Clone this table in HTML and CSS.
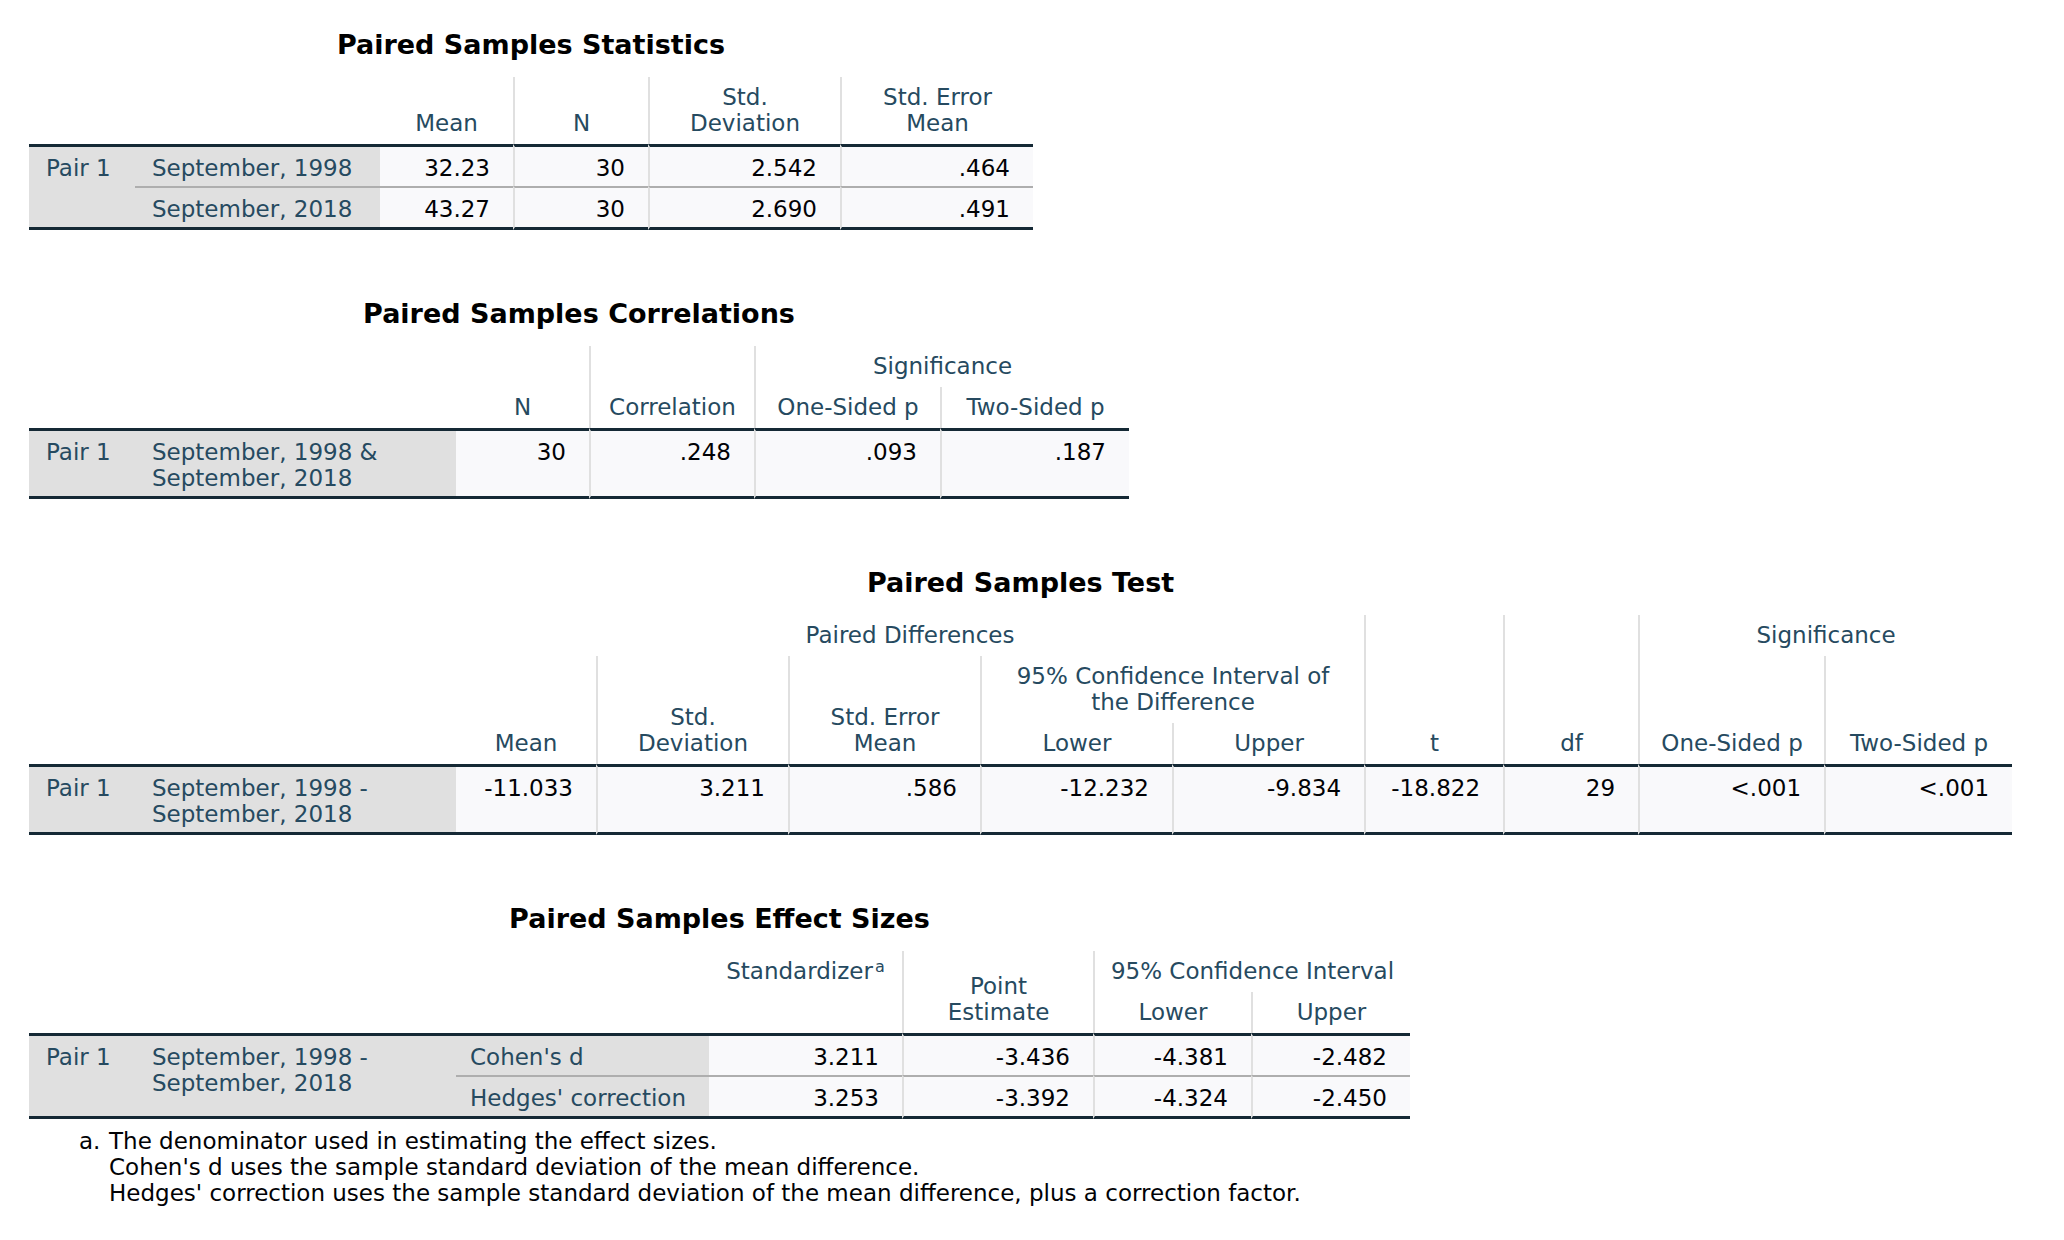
FILE: index.html
```html
<!DOCTYPE html>
<html>
<head>
<meta charset="utf-8">
<title>Paired Samples T-Test</title>
<link rel="stylesheet" href="styles.css">
</head>
<body>

<section class="pivot">
  <h2 class="title">Paired Samples Statistics</h2>
  <table class="pt w1">
    <colgroup><col class="c106"><col class="c245"><col class="c133"><col class="c135"><col class="c192"><col class="c193"></colgroup>
    <thead>
      <tr><th colspan="2"></th><th>Mean</th><th class="vl">N</th><th class="vl">Std.<br>Deviation</th><th class="vl">Std. Error<br>Mean</th></tr>
    </thead>
    <tbody>
      <tr><th class="lab bb" rowspan="2">Pair 1</th><th class="lab">September, 1998</th><td>32.23</td><td class="vl">30</td><td class="vl">2.542</td><td class="vl">.464</td></tr>
      <tr class="sep"><th class="lab">September, 2018</th><td>43.27</td><td class="vl">30</td><td class="vl">2.690</td><td class="vl">.491</td></tr>
    </tbody>
  </table>
</section>

<section class="pivot">
  <h2 class="title">Paired Samples Correlations</h2>
  <table class="pt w2">
    <colgroup><col class="c106"><col class="c321"><col class="c133"><col class="c165"><col class="c186"><col class="c189"></colgroup>
    <thead>
      <tr><th colspan="2" rowspan="2"></th><th rowspan="2">N</th><th rowspan="2" class="vl">Correlation</th><th colspan="2" class="vl">Significance</th></tr>
      <tr><th class="vl">One-Sided p</th><th class="vl">Two-Sided p</th></tr>
    </thead>
    <tbody>
      <tr><th class="lab">Pair 1</th><th class="lab">September, 1998 &amp;<br>September, 2018</th><td>30</td><td class="vl">.248</td><td class="vl">.093</td><td class="vl">.187</td></tr>
    </tbody>
  </table>
</section>

<section class="pivot">
  <h2 class="title">Paired Samples Test</h2>
  <table class="pt w3">
    <colgroup><col class="c106"><col class="c321"><col class="c140"><col class="c192"><col class="c192"><col class="c192"><col class="c192"><col class="c139"><col class="c135"><col class="c186"><col class="c188"></colgroup>
    <thead>
      <tr><th colspan="2" rowspan="3"></th><th colspan="5">Paired Differences</th><th rowspan="3" class="vl">t</th><th rowspan="3" class="vl">df</th><th colspan="2" class="vl">Significance</th></tr>
      <tr><th rowspan="2">Mean</th><th rowspan="2" class="vl">Std.<br>Deviation</th><th rowspan="2" class="vl">Std. Error<br>Mean</th><th colspan="2" class="vl">95% Confidence Interval of<br>the Difference</th><th rowspan="2" class="vl">One-Sided p</th><th rowspan="2" class="vl">Two-Sided p</th></tr>
      <tr><th class="vl">Lower</th><th class="vl">Upper</th></tr>
    </thead>
    <tbody>
      <tr><th class="lab">Pair 1</th><th class="lab">September, 1998 -<br>September, 2018</th><td>-11.033</td><td class="vl">3.211</td><td class="vl">.586</td><td class="vl">-12.232</td><td class="vl">-9.834</td><td class="vl">-18.822</td><td class="vl">29</td><td class="vl">&lt;.001</td><td class="vl">&lt;.001</td></tr>
    </tbody>
  </table>
</section>

<section class="pivot">
  <h2 class="title">Paired Samples Effect Sizes</h2>
  <table class="pt w4">
    <colgroup><col class="c106"><col class="c321"><col class="c253"><col class="c193"><col class="c191"><col class="c158"><col class="c159"></colgroup>
    <thead>
      <tr><th colspan="3" rowspan="2"></th><th rowspan="2" class="top">Standardizer<sup class="fn">a</sup></th><th rowspan="2" class="vl">Point<br>Estimate</th><th colspan="2" class="vl">95% Confidence Interval</th></tr>
      <tr><th class="vl">Lower</th><th class="vl">Upper</th></tr>
    </thead>
    <tbody>
      <tr><th class="lab bb" rowspan="2">Pair 1</th><th class="lab bb" rowspan="2">September, 1998 -<br>September, 2018</th><th class="lab eff">Cohen's d</th><td>3.211</td><td class="vl">-3.436</td><td class="vl">-4.381</td><td class="vl">-2.482</td></tr>
      <tr class="sep"><th class="lab eff">Hedges' correction</th><td>3.253</td><td class="vl">-3.392</td><td class="vl">-4.324</td><td class="vl">-2.450</td></tr>
    </tbody>
  </table>
  <div class="foot">
    <span class="mark">a.</span>
    <div class="lines">
      <div>The denominator used in estimating the effect sizes.</div>
      <div>Cohen's d uses the sample standard deviation of the mean difference.</div>
      <div>Hedges' correction uses the sample standard deviation of the mean difference, plus a correction factor.</div>
    </div>
  </div>
</section>

</body>
</html>
```

FILE: styles.css
```css
html, body {
  background: #ffffff;
}
body {
  margin: 0;
  padding: 28px 0 0 29px;
  font-family: "DejaVu Sans", "Liberation Sans", sans-serif;
  font-size: 23px;
  color: #010205;
}
.pivot {
  width: max-content;
  margin-bottom: 67px;
}
.title {
  margin: 0 0 15px;
  font-size: 27px;
  font-weight: bold;
  line-height: 34px;
  text-align: center;
  color: #000000;
}
.pt {
  border-collapse: separate;
  border-spacing: 0;
  table-layout: fixed;
  line-height: 26px;
}
.w1 { width: 1004px; }
.w2 { width: 1100px; }
.w3 { width: 1983px; }
.w4 { width: 1381px; }

.c106 { width: 106px; }
.c133 { width: 133px; }
.c135 { width: 135px; }
.c139 { width: 139px; }
.c140 { width: 140px; }
.c158 { width: 158px; }
.c159 { width: 159px; }
.c165 { width: 165px; }
.c186 { width: 186px; }
.c188 { width: 188px; }
.c189 { width: 189px; }
.c191 { width: 191px; }
.c192 { width: 192px; }
.c193 { width: 193px; }
.c245 { width: 245px; }
.c253 { width: 253px; }
.c321 { width: 321px; }

.pt th, .pt td {
  white-space: nowrap;
  font-weight: normal;
}
.pt thead th {
  padding: 7px 0 8px;
  color: #264a60;
  text-align: center;
  vertical-align: bottom;
  background: #ffffff;
}
.pt thead th.top {
  vertical-align: top;
}
.pt .vl {
  border-left: 2px solid #e0e0e0;
}
.pt tbody tr:first-child > * {
  border-top: 3px solid #152935;
}
.pt tbody tr:last-child > *,
.pt tbody .bb {
  border-bottom: 3px solid #152935;
}
.pt tbody tr.sep > * {
  border-top: 2px solid #aeaeae;
}
.pt td {
  padding: 8px 23px 5px 0;
  text-align: right;
  vertical-align: top;
  background: #f9f9fb;
  color: #010205;
}
.pt th.lab {
  padding: 8px 0 5px 17px;
  text-align: left;
  vertical-align: top;
  background: #e0e0e0;
  color: #264a60;
}
.pt th.eff {
  padding-left: 14px;
}
.fn {
  font-size: 16px;
  line-height: 0;
  vertical-align: 7px;
  margin-left: 2px;
}
.foot {
  display: flex;
  padding: 9px 0 0 50px;
  line-height: 26px;
  color: #010205;
}
.foot .mark {
  width: 30px;
  flex: none;
}
```
